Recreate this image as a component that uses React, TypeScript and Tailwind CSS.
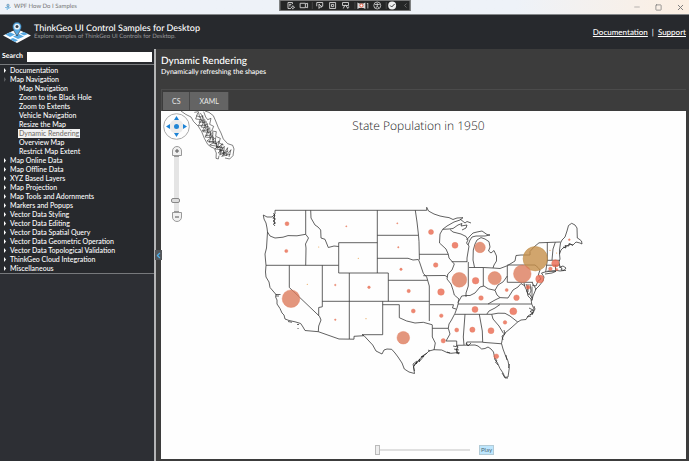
/*
 * WPF "How Do I" samples shell
 * Title bar + brand header + sample tree + map viewer
 */

import { useState } from "react";
import type { ReactNode } from "react";
import { ChevronLeft, Minus, Square, X } from "lucide-react";

type Category = { label: string; children?: string[] };

const categories: Category[] = [
  { label: "Documentation" },
  {
    label: "Map Navigation",
    children: [
      "Map Navigation",
      "Zoom to the Black Hole",
      "Zoom to Extents",
      "Vehicle Navigation",
      "Resize the Map",
      "Dynamic Rendering",
      "Overview Map",
      "Restrict Map Extent",
    ],
  },
  { label: "Map Online Data" },
  { label: "Map Offline Data" },
  { label: "XYZ Based Layers" },
  { label: "Map Projection" },
  { label: "Map Tools and Adornments" },
  { label: "Markers and Popups" },
  { label: "Vector Data Styling" },
  { label: "Vector Data Editing" },
  { label: "Vector Data Spatial Query" },
  { label: "Vector Data Geometric Operation" },
  { label: "Vector Data Topological Validation" },
  { label: "ThinkGeo Cloud Integration" },
  { label: "Miscellaneous" },
];

// x, y, radius
const populations: [string, number, number, number][] = [
  ["WA", 287, 223.7, 2], ["OR", 286.3, 251, 1.6], ["CA", 291, 298.7, 8.8],
  ["MT", 346.3, 226.3, 0.6], ["UT", 335.3, 285, 0.8], ["CO", 369, 287.3, 1.3],
  ["AZ", 335.3, 319.7, 0.8], ["ND", 397.3, 223.3, 0.6], ["SD", 398.3, 247.3, 0.7],
  ["NE", 401, 269.3, 1.2], ["KS", 408.7, 291, 1.7], ["OK", 413.3, 311, 2],
  ["TX", 403.3, 337.7, 6.3], ["MN", 431, 232, 2.5], ["IA", 435.7, 265, 2.3],
  ["MO", 441, 292, 3.3], ["AR", 441.3, 315.7, 1.8], ["LA", 443.3, 340.8, 2.2],
  ["WI", 455, 245.3, 3], ["IL", 459.3, 279.8, 7.4], ["MI", 480, 247.4, 5.3],
  ["IN", 475.6, 280.7, 3.3], ["OH", 494.7, 278.2, 6.6], ["KY", 481, 298, 2.3],
  ["TN", 475, 309.4, 3], ["MS", 456.7, 330, 2], ["AL", 472.4, 329.7, 2.6],
  ["GA", 491, 330.7, 3], ["FL", 496.3, 356.3, 2.4], ["SC", 505, 322.4, 1.8],
  ["NC", 513.3, 311.3, 3.5], ["VA", 516.5, 297.7, 2.8], ["WV", 506.7, 290, 1.5],
  ["MD", 528, 287.3, 2], ["PA", 522.3, 273.8, 8.8], ["NJ", 539.7, 279, 4],
  ["CT", 550.4, 268.8, 1.8], ["RI", 556.7, 269.5, 1.1], ["MA", 555.4, 263.4, 3.7],
  ["ME", 569.3, 239.7, 0.9],
];

const smallStates: [string, number, number][] = [
  ["ID", 318.7, 247], ["WY", 358.3, 258.3], ["NV", 307.3, 284.3],
  ["NM", 366, 318.7], ["VT", 550, 250.4], ["NH", 556.6, 253],
];

const coastline = [
  // Pacific coast and Mexican border
  "M275 210.3V214L272 217L267 217L263.3 215L264 219L266 223L267 228L267.5 232L267 240L266.5 248L265 254L265.5 260L266 265.3L265.5 272L266 277L269 282L270 287.5L273 291L276 294.5L275.6 297L277 300L277 304L280 308.5L282 313L284 315L285 319L289 320.5L295 321.8L300.7 323.5L303 327L305 330.5L318.3 331.7L339 339L354 339.2V336.3L364 335.7L368 340L372.7 345L376 351L382 354L384 350L387 349L391.7 349.3L395 353L398 357L402 363L404.3 369L409 372L414.5 373.5L413.5 367L415 364L421.7 357L426 354L429 351L434 349.7L441.7 350L447 352.5L451 353.3L456.7 352.7L459 354L456 350L458 347L456.7 345.3L465 345.2L475 345L478 346L481.7 349L485 348.5L488 347L491 349L493.5 352L495 360L497 362L500 368.5L503 373L505 377.3L508 377L509.3 368L508 361L506 357L503 349L501.5 343.5L502.5 338L505 333L511 328L517.7 322L521 320L526 319.5L528 316L532.7 313L534 309L531.7 304",
  // Chesapeake up to Maine
  "M531.7 304L531 299L528 296L527 291L525 287L524 283M531.7 301L533 296L536 289L534 286L532 282.3M535 290L539 286L543 281L544 277L541.5 273L545 272L550 271.2L557 270.5L560 271L564 270.5L566 268L563 266L560 267L559 262L560 259L559.5 254L561 250L563 248L567 246L570 244L573 245L576 242L580 243L582 244L581.5 241L579 239L577.3 238L577 228L575 225L571.7 223.3L568.5 225.5L567 231L565 237L562 240L560.5 243",
  // northern border and the Great Lakes
  "M275 210.3H426.7V207.3L428.5 211L434 214L440 216L445 217L449 217.6L453 219.5L457 218L463 217.7L460 220L454 222L447 226L442.7 229.3",
  "M442.7 229.3L449 229L453 228.5L458 225L462 223.5L461 226L467 225L466 228L462 230M450 229.5L453 232L461 234L466 236.5L468 240L466.5 243L469 246L468 252L467 258L467 262",
  "M466.5 240L470 236L473 233L477 232L482 231L487 234.5L490 235L485 236L480 236L476 236L472 237L470 240L468 245",
  "M460 219L465 223L467 221.5L471 223M474.5 267.3L473 260L473.3 250L475 244L477 240L481 237.6L485 239L489 241.7L490 247L488.5 251L491 253L494 250.5L496.5 256L496.5 261L494 265L493 268L500 268.5L507.3 265.7L515 261L516 255.5L521 255L530 255L530 251.5L534 247L539 242.8L560.5 242",
  "M547.5 271L556 271.3L552 273L545 274",
  "M540 270L538.3 275L541 279L538 281L536 286L532 285",
];

const stateBorders = [
  "M267.5 232L270 236L275 238L283 237.2L288 235.6L297 235.8L305.7 234.3",
  "M305.7 210.3V234.3L308.5 238L305.5 244L306 248L305.7 265.3",
  "M266 265.3H338.7V242.7H377.3",
  "M338.7 265.3V273H388.3V301.3",
  "M289.3 265.3V287.5L319.5 316.3L321 320L318.7 326L318.3 331.7",
  "M322.3 265.3V306.8L318.7 307.5V315.8",
  "M322.3 301.3H429.5",
  "M310.7 210.3L311 218L315 225L318 227L320.7 230L321 238L325 239.3L328.3 247.5L334 246L338.7 246.5",
  "M349.3 273V339",
  "M377.3 210.3V273",
  "M377.3 235.3H418.5",
  "M377.3 258.3H408L413 260L418.3 259.5L419.5 262L423.3 273.3L426.7 277L429.3 286V321",
  "M388.3 280.3H427.5",
  "M415.3 210.3L417 222L418.5 235.3L419 241.7L419.4 259.7",
  "M419.3 254.3H448.3",
  "M442.7 229.3L440 234L439.5 243L446 249L448.3 254.3L449 258L454.3 264L452 270L447.8 274L447 279L451 284L453 290L454.3 295L459 299L458 302.7",
  "M451.7 261.7H467",
  "M423.3 275.7L445 275.5L447.5 277",
  "M468.3 262V286L466 293L466 297",
  "M469 267.5H483.3L493 268",
  "M483.3 267.5V286",
  "M507.3 265.7V282.3H533",
  "M507.3 265H535L538 267.5L540 270",
  "M458 302.7L461.7 296L466 295.5L470 295.5L475 293L480 287L484 286L488.3 288.8L495 290.3L498 285L503.3 281.7L507.3 276",
  "M495 290.3L497 295L500 297.6L508 298L513 290L518 287L521 283.5L525 286",
  "M500 297.6L495 300L488 304",
  "M458 304H531.7",
  "M455 314.3H486.7L489 311L495 308L500 304.5",
  "M486.7 314.3H491.7L498 313.2L505 313.3L510 316L517.7 322",
  "M491.7 314.3L493 319L499 326L503.5 333.5",
  "M465 314.3L463.3 337L464 345",
  "M479.3 314.3L482.3 331L482.7 342.3L501.7 343.8",
  "M466.7 345V342H482.7",
  "M458.5 302.5L457 308L455 313.3L451.5 320L449 324L448.3 328.3L450 334L446 341H456.7V346",
  "M430 304.7H453.5L452.5 308L456 309",
  "M432.3 328.3H448.3",
  "M382.7 301.3V334.7H362L364 335.7",
  "M382.7 304.7H399.3V317.7L406.7 321L411 322L415 323L423.3 322.3L432 324.7",
  "M432.3 324.7V337L435.3 343L434 350",
  "M547.3 242.5V260L545.7 272",
  "M547.3 260.3H559.5M546.8 265.2H559.5M555.5 265.2V270.5",
  "M555.3 242.3L553 249L552 260",
  "M560.5 243L559.5 250V254",
];

// dense inlets and islands
const inlets = [
  "M273.5 213L275 216L272.8 218L275.5 219L273 221L275.6 223L273.3 224L275 226M274.4 214V224",
  "M275.5 294.5H280.5M276 296H279M288 321.5L292 322.3M297 324.5H299M297.5 328.5H298.6",
  "M414 366L417 362L416 364L420 359L419 362L424 356L421 357L427 353M414.5 371L413 364L417 361",
  "M453 346L458 347M454 349L459 350M456 352L460 353M457 348V354M447 352L450 353M428 350L430 351",
  "M526 284L528 288L526.5 291L529 295M530 284L531 291L529.5 294L532 298M528 284V292M532 286.5V300",
  "M529 308L533 310L530 311.500L533 313L530 315M534 306L535 309L532 315M527 317L531 316",
  "M495 358L497 361L495.500 362L498 365M502 373L505 378L508 378M506 355L507 360M508.500 368L509.500 364",
  "M504 330L505 334L502 336L503 340M466 343L468 346L471 343",
  "M561 270L566 270.5M559 267L562 268L561 270M563 247L566 248L565 245.500L569 246L569 243.500L573 245.500",
];

const islandChain = [
  "M78 78L92 88L108 96L116 110L130 124L140 140L148 160L158 178L168 186L178 190L184 204L183 220L190 222L192 212",
  "M150 78L162 82L175 92L182 108L190 128L198 144L205 162L218 176L233 181L237 192L234 212L224 222L210 219",
  "M118 82L130 80L134 96L144 92L140 108L150 104L148 122L158 116L156 136L164 128L166 150L174 142L172 166L182 158L180 178L192 168L188 190L202 176L196 200L208 184L206 206L218 188L214 212L228 194L222 216",
  "M124 92L138 98L132 112L148 110L138 126L154 128L144 140L162 142L150 156L168 158L156 168L178 172L164 180L188 184L180 192L198 194L190 204L212 204L200 214L226 208",
  "M128 84L122 102L140 104L130 122L152 120L142 138L160 134L152 152L172 150L162 172L182 168L186 186L204 188L194 210L220 198",
  "M146 80L152 96L158 104L168 100L164 118L176 124L170 138L184 140L182 154L196 160L192 174L206 180",
  "M136 84L146 100L142 114L154 110L152 126L160 124L158 142L168 140L164 156L176 156L174 174L186 176L184 188L196 184L194 198L206 196L204 210L214 206",
];

const captureIcons = [
  "M2 2h6v2M2 2v8h4M3.5 4.5h3M3.5 6.5h2M8.5 6v1m0 3v1M6 8.5h1m3 0h1M8.5 7a1.5 1.5 0 1 0 .1 0",
  "M1 3h7v6H1zM8 4l3-1v6l-3-1",
  "M2 7V2h8v5H8M5 4l4 4H6.500L5 10z",
  "M2 2h8v8H2zM4.500 4.500h3v3h-3z",
  "M2 2h8v4H2zM5 6L3 10M6 5l3 5 .5-2H11",
];

const panArrows = [
  { label: "Pan up", d: "M13.5 3L16 7H11Z" },
  { label: "Pan right", d: "M24 13.5L20 11V16Z" },
  { label: "Pan down", d: "M13.5 24L11 20H16Z" },
  { label: "Pan left", d: "M3 13.5L7 11V16Z" },
];

export default function App() {
  return (
    <div className="flex min-h-screen flex-col overflow-hidden bg-[#27292d] font-['Lato','Open_Sans',sans-serif] text-white [text-rendering:geometricPrecision]">
      <TitleBar />
      <BrandHeader />
      <div className="flex flex-1">
        <Sidebar />
        <SampleView />
      </div>
    </div>
  );
}

function TitleBar() {
  return (
    <div className="relative flex h-[15px] items-center border-b border-[#85888a] bg-linear-to-r from-[#eef2f8] from-75% to-[#fcefe2] px-1">
      <Logo className="h-2 w-2" />
      <span className="ml-[2px] flex-1 text-[6px] leading-[8px] text-[#777]">WPF How Do I Samples</span>
      <div className="flex items-center gap-[14px] text-[#777]">
        <button aria-label="Minimize"><Minus size={8} strokeWidth={1.5} /></button>
        <button aria-label="Maximize"><Square size={7} strokeWidth={2.5} /></button>
        <button aria-label="Close"><X size={9} strokeWidth={2.5} /></button>
      </div>
      <DebugToolbar />
    </div>
  );
}

function DebugToolbar() {
  return (
    <div className="absolute left-1/2 top-0 flex h-[11px] w-[131px] -translate-x-1/2 items-center border border-[#777] bg-[#252626] pl-[6px]">
      <svg className="h-[9px] w-[124px]" viewBox="0 0 124 9" fill="none" stroke="#d8d8d8">
        <path d="M-3 1v7" stroke="#666" strokeDasharray="1 1" />
        {captureIcons.map((d, i) => (
          <path key={d} d={d} transform={`translate(${[0, 13, 29, 42, 55][i]} 0) scale(.75)`} strokeWidth="1.2" />
        ))}
        <path d="M26 1v7M69 1v7M100.500 1v7" stroke="#555" strokeWidth=".7" />
        <path d="M71.500 1.500l2 1h4l2-1v6.500l-2-1h-4l-2 1z" fill="#d8d8d8" stroke="none" />
        <circle cx="75.5" cy="4.500" r="1.600" fill="#fff" stroke="#e2553c" />
        <path d="M81 3l1-1v5.500" strokeWidth=".8" />
        <circle cx="91.500" cy="4.500" r="3.500" strokeWidth=".8" />
        <path d="M89 3.500h5M91.500 2v3l-1.500 2M91.500 5l1.500 2" strokeWidth=".8" />
        <circle cx="106.500" cy="4.500" r="4" fill="#eee" stroke="none" />
        <path d="M104.500 4.500l1.500 1.500 3-3" stroke="#333" />
        <path d="M121 2.500l-2 2 2 2" stroke="#777" strokeWidth=".8" />
      </svg>
    </div>
  );
}

function Logo({ className }: { className: string }) {
  return (
    <svg className={className} viewBox="0 0 28 21">
      <path d="M14 7L28 13.500L14 21L0 13.500Z" fill="#fff" />
      <path d="M7 10.300L12 12.500L7 15L2.500 12.500ZM16 12L21 14.500L15 17L10 14.500ZM21 10L25 12L21 13.500L17 11.500ZM10 16L15 18.200L12 20L7 17.300Z" fill="#57a9e2" />
      <path d="M14 14C11.500 10 9.500 7 9.500 4.600A4.500 4.500 0 0 1 18.500 4.600C18.500 7 16.500 10 14 14Z" fill="#57a9e2" stroke="#27292d" strokeWidth=".6" />
      <circle cx="14" cy="4.700" r="2.900" fill="#e9f3fb" />
      <circle cx="14" cy="4.500" r="1.500" fill="#38404a" />
    </svg>
  );
}

function BrandHeader() {
  return (
    <header className="flex h-[34px] items-center bg-[#27292d] pl-[3px] pr-[3px]">
      <Logo className="h-[21px] w-7" />
      <div className="ml-[3px] flex-1">
        <h1 className="text-[9px] font-medium leading-[10px]">ThinkGeo UI Control Samples for Desktop</h1>
        <p className="text-[6px] leading-[8px] text-[#97989a]">
          Explore samples of ThinkGeo UI Controls for Desktop.
        </p>
      </div>
      <nav className="flex gap-1 text-[8px] font-medium leading-[10px]">
        <a href="#documentation" className="underline">Documentation</a>
        <span>|</span>
        <a href="#support" className="underline">Support</a>
      </nav>
    </header>
  );
}

function Sidebar() {
  const [selected, setSelected] = useState("Dynamic Rendering");

  return (
    <aside className="relative flex w-[156px] shrink-0 flex-col border-r-2 border-[#b4b5b6] bg-[#2d2f34]">
      <label className="flex h-[15px] items-center gap-1 bg-[#27292d] pl-[2px] pr-[2px] text-[7px] font-bold leading-[9px]">
        Search
        <input type="text" className="h-[10px] min-w-0 flex-1 bg-white px-1 text-[7px] text-black outline-none" />
      </label>
      <ul className="border-y border-[#77797c] bg-[#27292d] pt-px text-[7px] font-medium leading-[9px]">
        {categories.map((category) => (
          <li key={category.label}>
            <button className="flex h-[9px] items-center whitespace-nowrap">
              <svg className="mx-1 h-[5px] w-[2px]" viewBox="0 0 2 5">
                <path d="M0 0L2 2.500L0 5Z" fill={category.children ? "#5b5d60" : "#fff"} />
              </svg>
              {category.label}
            </button>
            {category.children && (
              <ul className="pl-[18px]">
                {category.children.map((sample) => (
                  <li key={sample} className="flex">
                    <button
                      onClick={() => setSelected(sample)}
                      className={`h-[9px] whitespace-nowrap px-px ${
                        selected === sample ? "bg-[#f2f2f2] text-[#77736f]" : ""
                      }`}
                    >
                      {sample}
                    </button>
                  </li>
                ))}
              </ul>
            )}
          </li>
        ))}
      </ul>
      {/* Collapse handle */}
      <button
        aria-label="Collapse samples"
        className="absolute -right-[8px] top-[201px] z-10 flex h-[10px] w-[7px] items-center justify-center bg-[#55585c] text-[#4db2ee]"
      >
        <ChevronLeft size={9} strokeWidth={3} className="shrink-0" />
      </button>
    </aside>
  );
}

function SampleView() {
  return (
    <main className="flex min-w-0 flex-1 flex-col bg-[#3c3c3c] pb-[2px] pl-[5px] pr-[3px] pt-[7px]">
      <h2 className="text-[10px] font-medium leading-[11px]">Dynamic Rendering</h2>
      <p className="text-[7px] font-medium leading-[10px]">Dynamically refreshing the shapes</p>
      <div className="mt-3 flex border-l border-t border-[#4b4b4b] pl-px pt-[2px] text-[7px] leading-[8px]">
        <Tab>CS</Tab>
        <Tab>XAML</Tab>
      </div>
      <MapPanel />
    </main>
  );
}

function Tab({ children }: { children: ReactNode }) {
  return (
    <button className="mb-px h-[18px] border-r border-[#484848] bg-[#646464] px-[9px] text-[#e8e8e8]">
      {children}
    </button>
  );
}

function MapPanel() {
  const [year, setYear] = useState(1950);

  return (
    <section className="relative flex min-h-[348px] flex-1 flex-col items-center justify-between bg-[#fefefe]">
      <svg className="absolute inset-0 h-full w-full" viewBox="161 111 525 348" fill="none">
        <g stroke="#3a3a3a" strokeWidth=".8" strokeLinejoin="round">
          {stateBorders.map((d) => <path key={d} d={d} />)}
          {coastline.map((d) => <path key={d} d={d} />)}
        </g>
        <g stroke="#222" strokeWidth=".7">
          {inlets.map((d) => <path key={d} d={d} />)}
        </g>
        <g transform="translate(155 85) scale(.3333)" stroke="#222" strokeWidth="1.7">
          {islandChain.map((d) => <path key={d} d={d} />)}
        </g>
        <circle cx="535.3" cy="258.7" r="12.2" fill="#c68f48" fillOpacity=".8" stroke="#bd8a45" strokeWidth=".5" />
        {populations.map(([name, x, y, r]) => (
          <circle
            key={name}
            cx={x}
            cy={y}
            r={r}
            fill={r > 5 ? "#dc7c5c" : "#ea6850"}
            fillOpacity=".8"
            stroke="#e27958"
            strokeWidth=".4"
          />
        ))}
        {smallStates.map(([name, x, y]) => (
          <circle key={name} cx={x} cy={y} r=".6" fill="#e9a75c" />
        ))}
      </svg>

      <MapControls />

      <h3 className="relative mt-[7px] pr-[10px] text-[12px] font-light leading-[16px] text-[#222] font-['Open_Sans',sans-serif]">
        State Population in {year}
      </h3>

      <div className="relative mb-1 flex items-center gap-[9px] pl-[22px]">
        <input
          type="range"
          aria-label="Year"
          min={1950}
          max={2020}
          step={10}
          value={year}
          onChange={(e) => setYear(Number(e.target.value))}
          className="h-[10px] w-[95px] appearance-none bg-transparent [&::-webkit-slider-runnable-track]:h-[2px] [&::-webkit-slider-runnable-track]:bg-[#e0e0e0] [&::-webkit-slider-thumb]:-mt-1 [&::-webkit-slider-thumb]:h-[10px] [&::-webkit-slider-thumb]:w-[5px] [&::-webkit-slider-thumb]:appearance-none [&::-webkit-slider-thumb]:border [&::-webkit-slider-thumb]:border-[#bbb] [&::-webkit-slider-thumb]:bg-[#eee]"
        />
        <button className="flex h-[10px] w-[15px] items-center justify-center border border-[#b3cbd6] bg-[#bee6fd] text-[6px] leading-[8px] text-[#4d6673]">
          Play
        </button>
      </div>
    </section>
  );
}

function MapControls() {
  return (
    <div className="absolute left-[2px] top-[2px] flex flex-col items-center">
      <svg className="h-[27px] w-[27px]" viewBox="0 0 27 27">
        <circle cx="13.500" cy="13.500" r="12.800" fill="#fdfdfd" stroke="#aaa" strokeWidth="1" />
        <circle cx="13.500" cy="13.500" r="7" fill="#ebebeb" />
        {panArrows.map((arrow) => (
          <path key={arrow.label} d={arrow.d} fill="#1c83d6" />
        ))}
        <circle cx="13.500" cy="13.500" r="2.500" fill="#2286d5" />
      </svg>
      <button aria-label="Zoom in" className="mt-[6px] h-[10px] w-[10px] rounded-t-full border border-[#999] bg-[#f1f1f1]">
        <svg className="h-2 w-2" viewBox="0 0 8 8">
          <path d="M4 2v4M2 4h4" stroke="#555" />
        </svg>
      </button>
      <input
        type="range"
        aria-label="Zoom level"
        defaultValue={17}
        className="h-[56px] w-[9px] appearance-none bg-transparent [direction:rtl] [writing-mode:vertical-lr] [&::-webkit-slider-runnable-track]:w-[5px] [&::-webkit-slider-runnable-track]:border-x [&::-webkit-slider-runnable-track]:border-[#999] [&::-webkit-slider-runnable-track]:bg-[#e4e4e4] [&::-webkit-slider-thumb]:-ml-[3px] [&::-webkit-slider-thumb]:h-[5px] [&::-webkit-slider-thumb]:w-[9px] [&::-webkit-slider-thumb]:appearance-none [&::-webkit-slider-thumb]:rounded-xs [&::-webkit-slider-thumb]:border [&::-webkit-slider-thumb]:border-[#888] [&::-webkit-slider-thumb]:bg-[#ddd]"
      />
      <button aria-label="Zoom out" className="h-[10px] w-[10px] rounded-b-full border border-[#999] bg-[#f1f1f1]">
        <svg className="h-2 w-2" viewBox="0 0 8 8">
          <path d="M2 4h4" stroke="#555" />
        </svg>
      </button>
    </div>
  );
}
